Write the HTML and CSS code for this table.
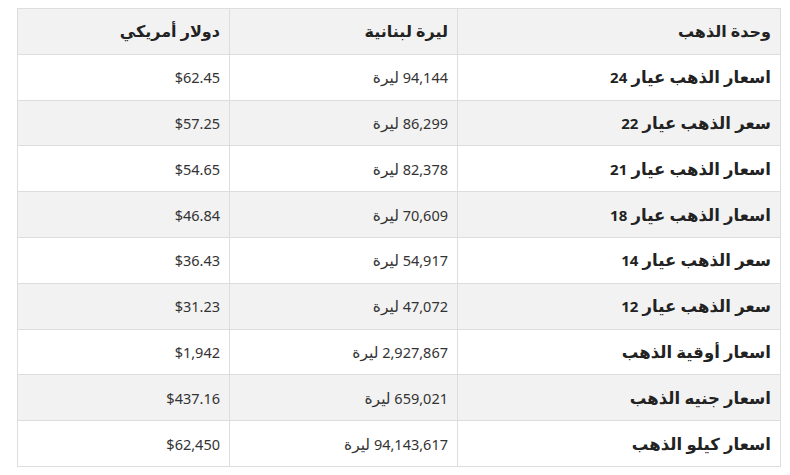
FILE: index.html
```html
<!DOCTYPE html>
<html lang="ar" dir="rtl">
<head>
<meta charset="utf-8">
<link rel="stylesheet" href="styles.css">
</head>
<body>
<div class="wrap">
<table class="prices">
<thead>
<tr><th class="c-unit">وحدة الذهب</th><th class="c-lbp">ليرة لبنانية</th><th class="c-usd">دولار أمريكي</th></tr>
</thead>
<tbody>
<tr><td class="name">اسعار الذهب عيار <span class="num">24</span></td><td>94,144 <span class="cur">ليرة</span></td><td>$62.45</td></tr>
<tr><td class="name">سعر الذهب عيار <span class="num">22</span></td><td>86,299 <span class="cur">ليرة</span></td><td>$57.25</td></tr>
<tr><td class="name">اسعار الذهب عيار <span class="num">21</span></td><td>82,378 <span class="cur">ليرة</span></td><td>$54.65</td></tr>
<tr><td class="name">اسعار الذهب عيار <span class="num">18</span></td><td>70,609 <span class="cur">ليرة</span></td><td>$46.84</td></tr>
<tr><td class="name">سعر الذهب عيار <span class="num">14</span></td><td>54,917 <span class="cur">ليرة</span></td><td>$36.43</td></tr>
<tr><td class="name">سعر الذهب عيار <span class="num">12</span></td><td>47,072 <span class="cur">ليرة</span></td><td>$31.23</td></tr>
<tr><td class="name">اسعار أوقية الذهب</td><td>2,927,867 <span class="cur">ليرة</span></td><td>$1,942</td></tr>
<tr><td class="name">اسعار جنيه الذهب</td><td>659,021 <span class="cur">ليرة</span></td><td>$437.16</td></tr>
<tr><td class="name">اسعار كيلو الذهب</td><td>94,143,617 <span class="cur">ليرة</span></td><td>$62,450</td></tr>
</tbody>
</table>
</div>
</body>
</html>
```
FILE: styles.css
```css
html, body {
  margin: 0;
  padding: 0;
  background: #fff;
}
body {
  font-family: "Noto Sans", "Open Sans", "DejaVu Sans", sans-serif;
  color: #333;
}
.wrap {
  padding: 8px 9px 0 18px;
}
.prices {
  width: 764px;
  border-collapse: collapse;
  direction: rtl;
}
.prices th,
.prices td {
  border: 1px solid #dddddd;
  height: 44.8px;
  padding: 0 9px;
  text-align: right;
  font-size: 14.5px;
  line-height: 20px;
}
.prices th {
  background: #f2f2f2;
  color: #222;
  font-weight: bold;
  font-size: 16px;
}
.c-unit { width: 304px; }
.c-lbp { width: 209px; }
.c-usd { width: 193px; }
.prices td.name {
  font-weight: bold;
  color: #222;
  font-size: 16.5px;
}
.prices td.name .num {
  font-size: 15px;
}
.cur {
  font-size: 15.5px;
}
.prices tbody tr:nth-child(even) td {
  background: #f2f2f2;
}
```
